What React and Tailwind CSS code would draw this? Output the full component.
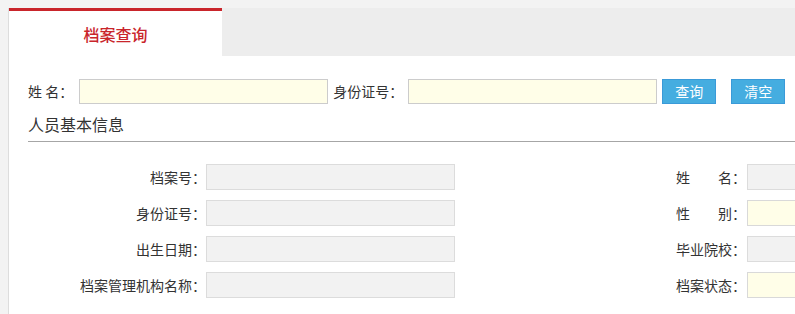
import React from "react";

const font = { fontFamily: '"Noto Sans CJK SC", "Noto Sans", sans-serif' };

const leftRows = [
  { label: "档案号：", yellow: false },
  { label: "身份证号：", yellow: false },
  { label: "出生日期：", yellow: false },
  { label: "档案管理机构名称：", yellow: false },
];

const rightRows = [
  { label: "姓\u3000\u3000名：", yellow: false },
  { label: "性\u3000\u3000别：", yellow: true },
  { label: "毕业院校：", yellow: false },
  { label: "档案状态：", yellow: true },
];

const Field = ({ yellow }) => (
  <input
    type="text"
    readOnly
    className={
      yellow
        ? "w-[249px] h-[26px] shrink-0 bg-[#fffee8] border border-[#d9d9d9] outline-none"
        : "w-[249px] h-[26px] shrink-0 bg-[#f2f2f2] border border-[#dcdcdc] outline-none"
    }
  />
);

export default function App() {
  return (
    <div
      className="w-full h-[314px] overflow-hidden bg-[#f3f3f3] pt-2 pl-2 text-[14px] text-[#333]"
      style={font}
    >
      <div className="h-full bg-white border-l border-[#dddddd] flex flex-col">
        {/* Tabs */}
        <div className="flex h-[48px] shrink-0">
          <div className="w-[213px] bg-white border-t-[3px] border-[#c9252b] flex items-center justify-center text-[16px] text-[#c9252b] font-medium">
            档案查询
          </div>
          <div className="flex-1 bg-[#ededed]" />
        </div>

        {/* Search */}
        <div className="pl-[19px] pt-[23px]">
          <div className="flex items-center h-[25px] whitespace-nowrap">
            <span>姓 名：</span>
            <input
              type="text"
              className="ml-[6px] w-[249px] h-[25px] shrink-0 bg-[#fffee8] border border-[#cccccc] outline-none"
            />
            <span className="ml-[5px]">身份证号：</span>
            <input
              type="text"
              className="ml-[5px] w-[249px] h-[25px] shrink-0 bg-[#fffee8] border border-[#cccccc] outline-none"
            />
            <button className="ml-[5px] w-[54px] h-[25px] shrink-0 bg-[#45ade0] border border-[#3a9ad8] text-white text-[14px]">
              查询
            </button>
            <button className="ml-[15px] w-[54px] h-[25px] shrink-0 bg-[#45ade0] border border-[#3a9ad8] text-white text-[14px]">
              清空
            </button>
          </div>

          <div className="mt-2 h-[30px] leading-[24px] text-[16px] border-b border-[#a6a6a6]">
            人员基本信息
          </div>

          {/* Info grid */}
          <div className="pt-[22px] flex flex-col gap-[10px]">
            {leftRows.map((row, i) => (
              <div key={row.label} className="flex items-center h-[26px] whitespace-nowrap">
                <span className="w-[178px] shrink-0 text-right">{row.label}</span>
                <Field yellow={row.yellow} />
                <span className="ml-[221px] w-[70px] shrink-0 text-right">
                  {rightRows[i].label}
                </span>
                <span className="ml-[1px]">
                  <Field yellow={rightRows[i].yellow} />
                </span>
              </div>
            ))}
          </div>
        </div>
      </div>
    </div>
  );
}
